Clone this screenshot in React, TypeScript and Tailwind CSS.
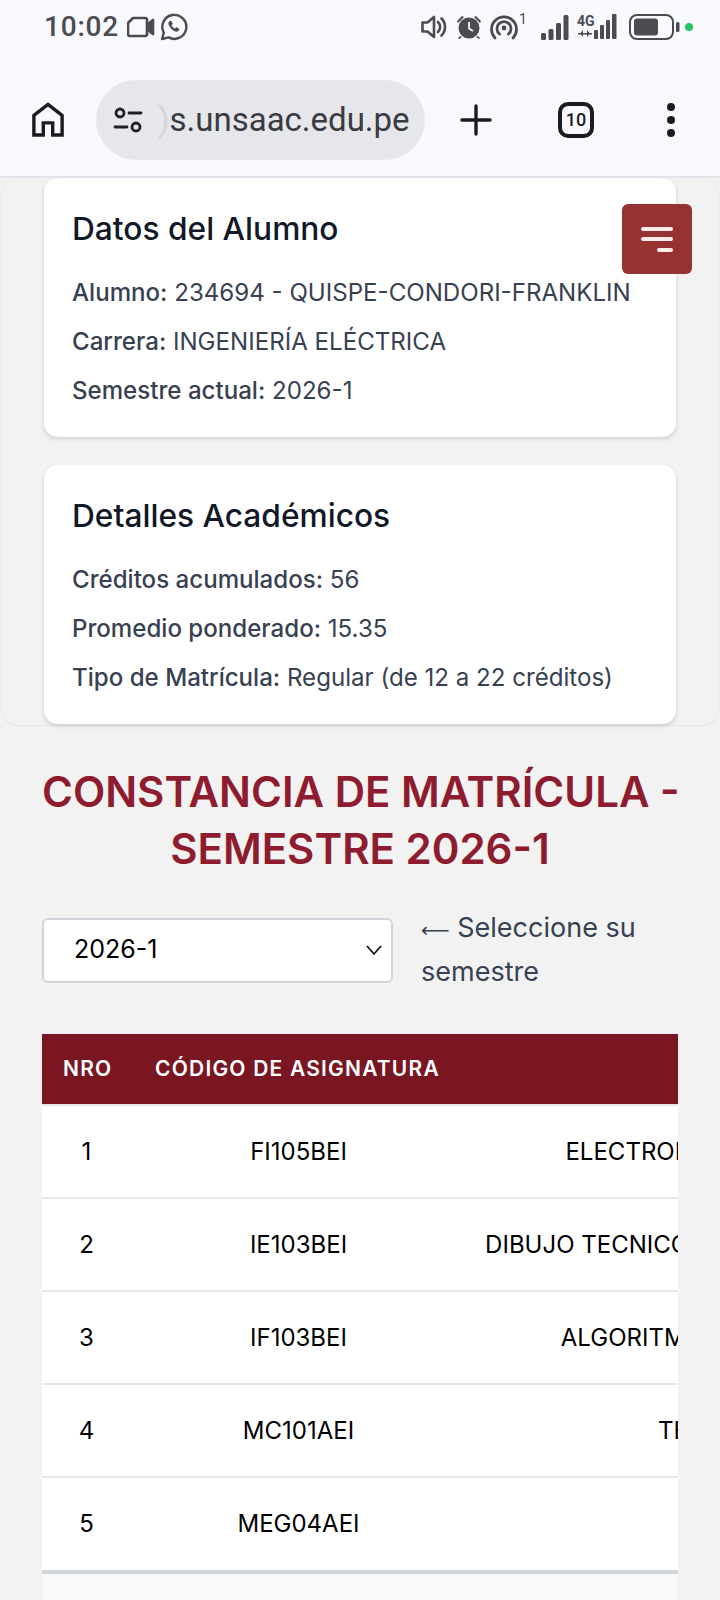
import React from 'react';

const rows = [
  { nro: 1, code: 'FI105BEI', name: 'ELECTROMAGNETISMO Y ONDAS' },
  { nro: 2, code: 'IE103BEI', name: 'DIBUJO TECNICO Y GEOMETRIA DESCRIPTIVA I' },
  { nro: 3, code: 'IF103BEI', name: 'ALGORITMOS Y PROGRAMACION I' },
  { nro: 4, code: 'MC101AEI', name: 'TEORIA GENERAL' },
  { nro: 5, code: 'MEG04AEI', name: 'ETICA' },
];

const StatusBar = () => (
  <div className="flex h-[60px] items-center justify-between pb-[6px] pl-[44px] pr-[27px] text-[#4b4b50]">
    <div className="flex items-center">
      <span className="font-['Roboto',sans-serif] text-[28px] font-medium leading-none tracking-[0.8px]">10:02</span>
      <svg className="ml-[8px]" width="28" height="26" viewBox="0 0 28 26" fill="none" stroke="currentColor" strokeWidth="2.6" strokeLinejoin="round">
        <path d="M6 4h12a2 2 0 0 1 2 2v14a2 2 0 0 1-2 2H3a2 2 0 0 1-2-2V9z" />
        <path d="M21 10l5-4v14l-5-4z" fill="currentColor" />
      </svg>
      <svg className="ml-[5px]" width="28" height="28" viewBox="0 0 28 28" fill="none" stroke="currentColor" strokeWidth="2.4" strokeLinejoin="round">
        <path d="M2 26l1.800-6.400A12 12 0 1 1 8.600 24.400z" />
        <path d="M9.500 8.500c-1 1-1 3 .8 5.600 2 2.800 4.600 4.400 6.600 4.200 1.200-.2 2-1 2.100-2.200l-2.800-1.500-1.300 1.300c-1.500-.6-3-2-3.700-3.700l1.200-1.300-1.400-2.800z" fill="currentColor" strokeWidth="0.8" />
      </svg>
    </div>
    <div className="flex items-center">
      <svg width="26" height="26" viewBox="0 0 26 26" fill="none" stroke="currentColor" strokeWidth="2.600" strokeLinejoin="round">
        <path d="M1.500 8.500h5L13 3v20l-6.500-5.500h-5z" />
        <path d="M17 8a7 7 0 0 1 0 10M20.500 4.500a12 12 0 0 1 0 17" strokeLinecap="round" />
      </svg>
      <svg className="ml-[9px]" width="26" height="26" viewBox="0 0 26 26" fill="currentColor">
        <circle cx="13" cy="14" r="10.500" />
        <path d="M1 7l5-5 2 1-6 6zM25 7l-5-5-2 1 6 6zM4 22l-2 2 1 1 3-2zM22 22l2 2-1 1-3-2z" />
        <path d="M13 8v6.500l4 2.500" fill="none" stroke="#f8f9ff" strokeWidth="1.800" />
      </svg>
      <svg className="ml-[7px]" width="38" height="28" viewBox="0 0 38 28" fill="none" stroke="currentColor" strokeWidth="2.800" strokeLinecap="round">
        <path d="M6 25a12.500 12.500 0 1 1 18 0M10.500 21a7 7 0 1 1 9 0" />
        <circle cx="15" cy="15" r="2.400" fill="currentColor" stroke="none" />
        <text x="30" y="11" fontSize="14" fill="currentColor" stroke="none" fontFamily="Roboto, sans-serif">1</text>
      </svg>
      <svg className="ml-[14px]" width="28" height="26" viewBox="0 0 28 26" fill="currentColor">
        <rect x="0" y="19" width="5" height="7" rx="1.500" />
        <rect x="7.500" y="15" width="5" height="11" rx="1.500" />
        <rect x="15" y="9" width="5" height="17" rx="1.500" />
        <rect x="22.500" y="1" width="5" height="25" rx="1.500" />
      </svg>
      <svg className="ml-[8px]" width="42" height="28" viewBox="0 0 42 28" fill="currentColor">
        <text x="0" y="13" fontSize="14" fontWeight="700" fontFamily="Roboto, sans-serif">4G</text>
        <path d="M1 20h14v1.500H1z" />
        <path d="M6 17v7l-3-3.500zM10 17v7l3-3.500z" />
        <rect x="17" y="17" width="4" height="9" rx="1" />
        <rect x="23" y="12" width="4" height="14" rx="1" />
        <rect x="29" y="7" width="4" height="19" rx="1" />
        <rect x="35" y="1" width="4.500" height="25" rx="1" />
      </svg>
      <svg className="ml-[10px]" width="52" height="28" viewBox="0 0 52 28" fill="currentColor">
        <rect x="1" y="2" width="43" height="24" rx="7" fill="none" stroke="currentColor" strokeWidth="2" />
        <rect x="5" y="5.500" width="24" height="17" rx="3" />
        <rect x="47" y="9" width="3.500" height="10" rx="1.500" />
      </svg>
      <span className="ml-[4px] h-[8px] w-[8px] rounded-full bg-[#22c55e]" />
    </div>
  </div>
);

const BrowserBar = () => (
  <div className="flex h-[118px] items-center border-b-2 border-[#e4e5ec] pt-[3px] text-[#1b1c20]">
    <svg className="ml-[32px] shrink-0" width="32" height="36" viewBox="0 0 34 38" fill="none" stroke="currentColor" strokeWidth="3.600">
      <path d="M2 35V14L17 2.500 32 14v21H22V22H12v13z" />
    </svg>
    <div className="ml-[32px] flex h-[80px] w-[329px] shrink-0 items-center overflow-hidden rounded-full bg-[#e6e7eb]">
      <svg className="ml-[17px] shrink-0" width="30" height="26" viewBox="0 0 30 26" fill="none" stroke="#1f2024" strokeWidth="2.800" strokeLinecap="round">
        <circle cx="7" cy="6" r="4" />
        <path d="M16 6h12M2 20h12" />
        <circle cx="23" cy="20" r="4" />
      </svg>
      <span className="ml-[15px] whitespace-nowrap font-['Roboto',sans-serif] text-[33px] leading-none text-[#3a3b40]">
        <span className="text-[#d4d4d8]">)</span>s.unsaac.edu.pe
      </span>
    </div>
    <svg className="ml-[35px] shrink-0" width="32" height="32" viewBox="0 0 34 34" stroke="currentColor" strokeWidth="3.600" strokeLinecap="round">
      <path d="M17 2v30M2 17h30" />
    </svg>
    <div className="ml-[66px] flex h-[36px] w-[36px] shrink-0 items-center justify-center rounded-[10px] border-4 border-[#1b1c20] font-['Roboto',sans-serif] text-[18px] font-medium leading-none">10</div>
    <div className="ml-[73px] flex shrink-0 flex-col gap-[5px]">
      <span className="h-[8px] w-[8px] rounded-full bg-[#1b1c20]" />
      <span className="h-[8px] w-[8px] rounded-full bg-[#1b1c20]" />
      <span className="h-[8px] w-[8px] rounded-full bg-[#1b1c20]" />
    </div>
  </div>
);

const InfoLine = ({ label, value }: { label: string; value: string }) => (
  <p className="whitespace-nowrap text-[24.1px] leading-[49px] text-[#374151]">
    <span className="font-medium">{label}:</span> {value}
  </p>
);

const Card = ({ title, children }: { title: string; children: React.ReactNode }) => (
  <div className="h-[259px] w-[632px] rounded-[14px] bg-white px-[28px] pt-[31px] shadow-[0_2px_4px_rgba(0,0,0,0.15)]">
    <h3 className="mb-[19px] text-[31.7px] font-medium leading-[40px] text-[#111827]">{title}</h3>
    {children}
  </div>
);

export default function App() {
  return (
    <div className="relative h-[1600px] w-[720px] overflow-hidden bg-[#f2f2f3] font-['Inter',sans-serif]">
      <div className="bg-[#f8f9ff]">
        <StatusBar />
        <BrowserBar />
      </div>

      <div className="mx-[1px] flex flex-col gap-[28px] rounded-[16px] border border-t-0 border-[#e5e7eb] pb-[1px] pl-[42px]">
        <Card title="Datos del Alumno">
          <InfoLine label="Alumno" value="234694 - QUISPE-CONDORI-FRANKLIN" />
          <InfoLine label="Carrera" value="INGENIERÍA ELÉCTRICA" />
          <InfoLine label="Semestre actual" value="2026-1" />
        </Card>
        <Card title="Detalles Académicos">
          <InfoLine label="Créditos acumulados" value="56" />
          <InfoLine label="Promedio ponderado" value="15.35" />
          <InfoLine label="Tipo de Matrícula" value="Regular (de 12 a 22 créditos)" />
        </Card>
      </div>

      <button className="absolute left-[622px] top-[204px] flex h-[70px] w-[70px] flex-col items-end justify-center gap-[6.5px] rounded-[6px] bg-[#963232] pr-[19px]">
        <span className="h-[4px] w-[32px] rounded-full bg-[#fdecec]" />
        <span className="h-[4px] w-[32px] rounded-full bg-[#fdecec]" />
        <span className="h-[4px] w-[16px] rounded-full bg-[#fdecec]" />
      </button>

      <div className="px-[42px]">
        <h1 className="mt-[37px] whitespace-nowrap text-center text-[42px] font-semibold leading-[57px] text-[#8e1c2e]">
          CONSTANCIA DE MATRÍCULA -<br />SEMESTRE 2026-1
        </h1>

        <div className="mt-[30px] flex items-center gap-[28px]">
          <div className="flex h-[65px] w-[351px] shrink-0 items-center justify-between rounded-[6px] border-2 border-[#d1d5db] bg-white pl-[30px] pr-[8px] text-[25px] text-black">
            2026-1
            <svg width="18" height="12" viewBox="0 0 18 12" fill="none" stroke="#111" strokeWidth="1.800">
              <path d="M2 2l7 8 7-8" />
            </svg>
          </div>
          <p className="text-[27px] leading-[42px] text-[#374151]">
            <span className="font-['DejaVu_Sans',sans-serif] text-[20px]">⟵</span> Seleccione su semestre
          </p>
        </div>

        <div className="mt-[41px] w-[636px] overflow-hidden">
          <table className="w-[1020px] table-fixed border-collapse text-center text-[24px] text-black">
            <thead>
              <tr className="h-[71px] border-b-2 border-[#e5e7eb] bg-[#7a1522] text-left text-[21px] tracking-[1.2px] text-white">
                <th className="w-[97px] pl-[21px] font-semibold">NRO</th>
                <th className="w-[319px] whitespace-nowrap pl-[16px] font-semibold">CÓDIGO DE ASIGNATURA</th>
                <th />
              </tr>
            </thead>
            <tbody className="bg-white">
              {rows.map((row, i) => (
                <tr key={row.nro} className={i === rows.length - 1 ? 'h-[93px]' : 'h-[93px] border-b-2 border-[#e5e7eb]'}>
                  <td className="pr-[8px]">{row.nro}</td>
                  <td>{row.code}</td>
                  <td className="whitespace-nowrap">{row.name}</td>
                </tr>
              ))}
            </tbody>
          </table>
          <div className="h-[40px] border-t-4 border-[#d1d5db] bg-[#f9fafb]" />
        </div>
      </div>
    </div>
  );
}
